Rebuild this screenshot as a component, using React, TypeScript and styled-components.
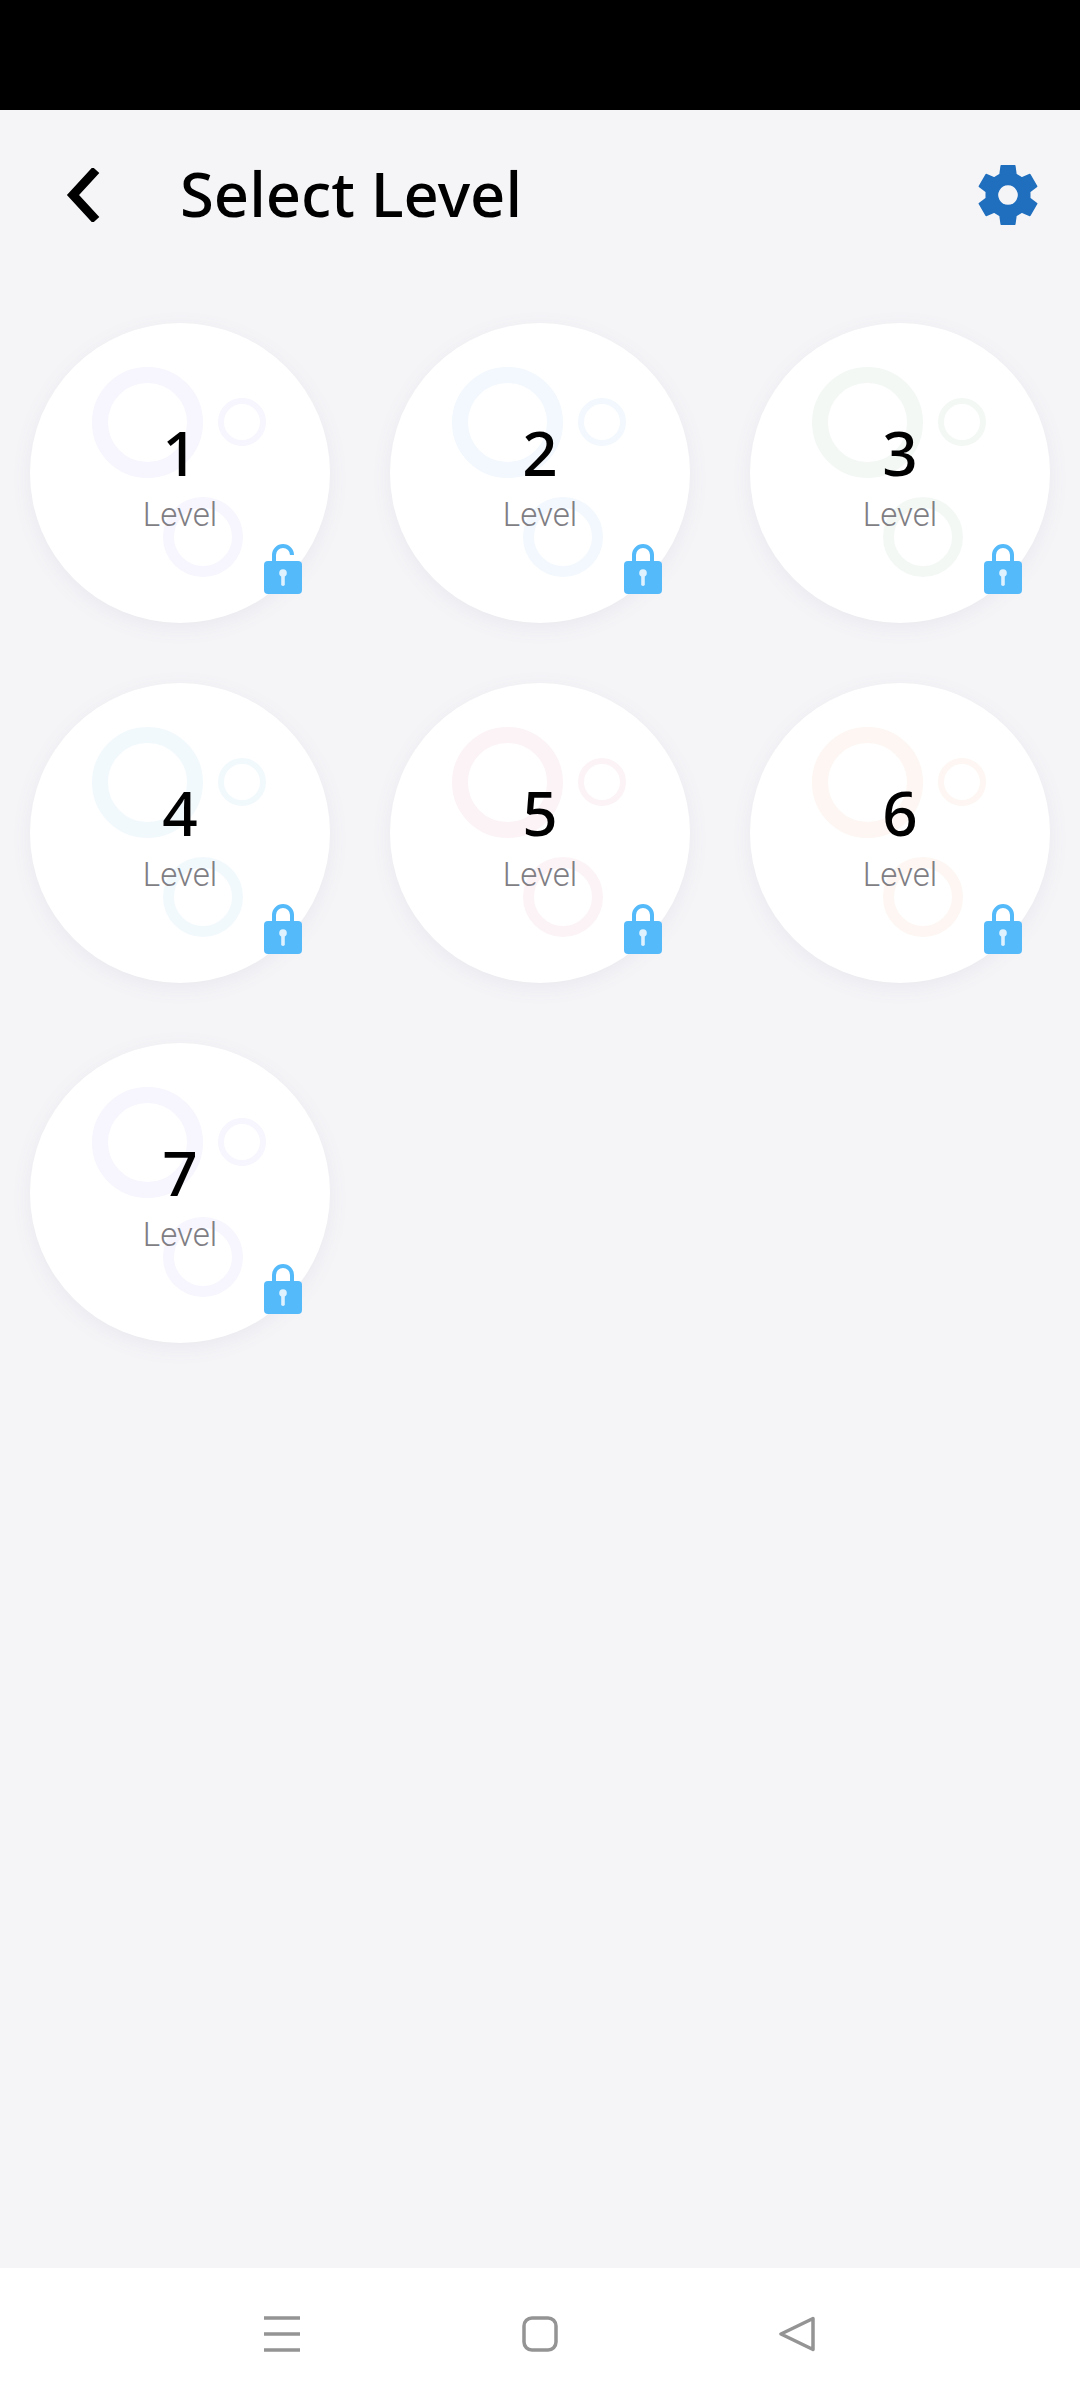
import styled, { createGlobalStyle } from "styled-components";

const GlobalStyle = createGlobalStyle`
    html, body {
        margin: 0;
        padding: 0;
        background-color: #f5f4f7;
    }
`;

const Page = styled.div`
    width: 1080px;
    height: 2400px;
    display: flex;
    flex-direction: column;
    background-color: #f5f4f7;
    overflow: hidden;
`;

const StatusBar = styled.div`
    height: 110px;
    flex-shrink: 0;
    background-color: #000;
`;

const Header = styled.header`
    height: 170px;
    flex-shrink: 0;
    display: flex;
    align-items: center;
    padding: 0 42px 0 66px;
    box-sizing: border-box;
`;

const BackIcon = styled.svg`
    width: 35px;
    height: 54px;
    flex-shrink: 0;
`;

const Title = styled.h1`
    flex: 1;
    margin: -4px 0 0 79px;
    font-family: "Noto Sans", sans-serif;
    font-size: 61.5px;
    font-weight: 500;
    line-height: 80px;
    color: #000;
`;

const GearIcon = styled.svg`
    width: 60px;
    height: 60px;
    flex-shrink: 0;
    fill: #1f6fbe;
    stroke: #1f6fbe;
    stroke-width: 1.5;
    stroke-linejoin: round;
`;

const Grid = styled.main`
    flex: 1;
    display: grid;
    grid-template-columns: repeat(3, 300px);
    grid-auto-rows: 300px;
    gap: 60px;
    align-content: start;
    padding: 43px 0 0 30px;
`;

const Card = styled.div`
    position: relative;
    width: 300px;
    height: 300px;
    border-radius: 50%;
    background-color: #fff;
    box-shadow: 0 5px 20px rgba(120, 115, 140, 0.08);
    display: flex;
    flex-direction: column;
    align-items: center;
`;

const Ring = styled.span<{ $left: number; $top: number; $size: number; $width: number; $color: string }>`
    position: absolute;
    left: ${(p) => p.$left}px;
    top: ${(p) => p.$top}px;
    width: ${(p) => p.$size}px;
    height: ${(p) => p.$size}px;
    box-sizing: border-box;
    border-radius: 50%;
    border: ${(p) => p.$width}px solid ${(p) => p.$color};
`;

const Number = styled.div`
    position: relative;
    margin-top: 91px;
    font-family: "Noto Sans", sans-serif;
    font-size: 62px;
    font-weight: 500;
    line-height: 76px;
    color: #000;
`;

const Label = styled.div`
    position: relative;
    margin-top: 6px;
    font-family: Roboto, sans-serif;
    font-size: 33px;
    font-weight: 300;
    line-height: 38px;
    color: #7f7e84;
`;

const LockIcon = styled.svg`
    position: absolute;
    left: 234px;
    top: 221px;
    width: 38px;
    height: 50px;
`;

const NavBar = styled.nav`
    height: 132px;
    flex-shrink: 0;
    background-color: #fff;
    display: flex;
    align-items: center;
    justify-content: space-between;
    padding: 0 265px 0 264px;
    box-sizing: border-box;
`;

const NavIcon = styled.svg`
    width: 36px;
    height: 36px;
    fill: none;
    stroke: #949494;
    stroke-width: 3.5;
`;

// six flat teeth around the hub, first one pointing straight up
const gearOutline = Array.from({ length: 6 }, (_, i) => {
    const a = ((i * 60 - 90) * Math.PI) / 180;
    const at = (radius: number, side: number) =>
        `${(30 + radius * Math.cos(a) - side * Math.sin(a)).toFixed(2)} ${(30 + radius * Math.sin(a) + side * Math.cos(a)).toFixed(2)}`;
    return `${at(20.5, -8)} L${at(29.2, -6.8)} L${at(29.2, 6.8)} L${at(20.5, 8)}`;
}).join(" L");

function Lock({ open }: { open: boolean }) {
    return (
        <LockIcon viewBox="0 0 38 50">
            <path
                d={open ? "M10 20V11a9 9 0 0 1 18 0" : "M10 20V11a9 9 0 0 1 18 0v9"}
                fill="none"
                stroke="#55bafa"
                strokeWidth="4"
            />
            <rect y="17" width="38" height="33" rx="4" fill="#55bafa" />
            <circle cx="19" cy="29" r="3.8" fill="#dff2ff" />
            <rect x="17.2" y="29" width="3.6" height="13" rx="1.8" fill="#dff2ff" />
        </LockIcon>
    );
}

const levels = [
    { id: 1, color: "#f7f5fd", open: true },
    { id: 2, color: "#f2f8fd", open: false },
    { id: 3, color: "#f3f8f5", open: false },
    { id: 4, color: "#f2f9fd", open: false },
    { id: 5, color: "#fcf3f7", open: false },
    { id: 6, color: "#fdf6f2", open: false },
    { id: 7, color: "#f7f5fd", open: false },
];

export default function App() {
    return (
        <Page>
            <GlobalStyle />
            <StatusBar />
            <Header>
                <BackIcon viewBox="0 0 35 54">
                    <path d="M30 2 L7 27 L30 52" fill="none" stroke="#000" strokeWidth="9" />
                </BackIcon>
                <Title>Select Level</Title>
                <GearIcon viewBox="0 0 60 60">
                    <path
                        fillRule="evenodd"
                        d={`M${gearOutline} Z M30 19.5a10.5 10.5 0 1 0 .01 0 Z`}
                    />
                </GearIcon>
            </Header>
            <Grid>
                {levels.map((level) => (
                    <Card key={level.id}>
                        <Ring $left={62} $top={44} $size={111} $width={16} $color={level.color} />
                        <Ring $left={188} $top={75} $size={48} $width={6} $color={level.color} />
                        <Ring $left={133} $top={174} $size={80} $width={11} $color={level.color} />
                        <Number>{level.id}</Number>
                        <Label>Level</Label>
                        <Lock open={level.open} />
                    </Card>
                ))}
            </Grid>
            <NavBar>
                <NavIcon viewBox="0 0 36 36">
                    <path d="M0 2h36M0 18h36M0 34h36" />
                </NavIcon>
                <NavIcon viewBox="0 0 36 36">
                    <rect x="2" y="2" width="32" height="32" rx="8" />
                </NavIcon>
                <NavIcon viewBox="0 0 36 36">
                    <path d="M34 2.5 L2 18 L34 33.5 Z" strokeLinejoin="round" />
                </NavIcon>
            </NavBar>
        </Page>
    );
}
